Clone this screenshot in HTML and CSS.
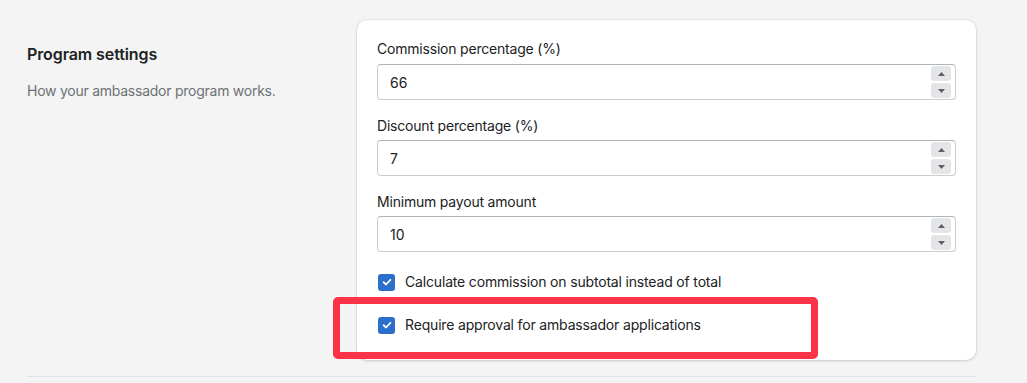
FILE: index.html
```html
<!DOCTYPE html>
<html>
<head>
<meta charset="utf-8">
<link rel="stylesheet" href="styles.css">
</head>
<body>
<div class="page">
  <section class="section">
    <div class="aside">
      <h2 class="title">Program settings</h2>
      <p class="desc">How your ambassador program works.</p>
    </div>
    <div class="card">
      <div class="field">
        <label class="label">Commission percentage (%)</label>
        <div class="input">
          <span class="value">66</span>
          <div class="spinner">
            <span class="spin"><svg width="7" height="4" viewBox="0 0 7 4"><path d="M0 4 L3.5 0 L7 4 Z" fill="#5c5f62"/></svg></span>
            <span class="spin"><svg width="7" height="4" viewBox="0 0 7 4"><path d="M0 0 L3.5 4 L7 0 Z" fill="#5c5f62"/></svg></span>
          </div>
        </div>
      </div>
      <div class="field">
        <label class="label">Discount percentage (%)</label>
        <div class="input">
          <span class="value">7</span>
          <div class="spinner">
            <span class="spin"><svg width="7" height="4" viewBox="0 0 7 4"><path d="M0 4 L3.5 0 L7 4 Z" fill="#5c5f62"/></svg></span>
            <span class="spin"><svg width="7" height="4" viewBox="0 0 7 4"><path d="M0 0 L3.5 4 L7 0 Z" fill="#5c5f62"/></svg></span>
          </div>
        </div>
      </div>
      <div class="field">
        <label class="label">Minimum payout amount</label>
        <div class="input">
          <span class="value">10</span>
          <div class="spinner">
            <span class="spin"><svg width="7" height="4" viewBox="0 0 7 4"><path d="M0 4 L3.5 0 L7 4 Z" fill="#5c5f62"/></svg></span>
            <span class="spin"><svg width="7" height="4" viewBox="0 0 7 4"><path d="M0 0 L3.5 4 L7 0 Z" fill="#5c5f62"/></svg></span>
          </div>
        </div>
      </div>
      <div class="check first">
        <span class="box"><svg width="12" height="12" viewBox="0 0 12 12"><path d="M2.6 6.2 L5 8.5 L9.4 3.8" fill="none" stroke="#fff" stroke-width="1.8" stroke-linecap="round" stroke-linejoin="round"/></svg></span>
        <span class="check-text">Calculate commission on subtotal instead of total</span>
      </div>
      <div class="check second">
        <span class="box"><svg width="12" height="12" viewBox="0 0 12 12"><path d="M2.6 6.2 L5 8.5 L9.4 3.8" fill="none" stroke="#fff" stroke-width="1.8" stroke-linecap="round" stroke-linejoin="round"/></svg></span>
        <span class="check-text">Require approval for ambassador applications</span>
      </div>
    </div>
  </section>
  <div class="divider"></div>
  <div class="highlight"></div>
</div>
</body>
</html>
```
FILE: styles.css
```css
html, body {
  margin: 0;
  padding: 0;
  background: #f4f4f4;
  font-family: Inter, "Noto Sans", sans-serif;
  color: #202223;
}
.page {
  position: relative;
  width: 1027px;
  height: 383px;
  overflow: hidden;
  padding: 20px 0 0 27px;
  box-sizing: border-box;
}
.section {
  display: flex;
}
.aside {
  width: 330px;
  flex-shrink: 0;
  padding-top: 24px;
}
.title {
  margin: 0;
  font-size: 16px;
  line-height: 20px;
  font-weight: 600;
  letter-spacing: -0.1px;
  color: #202223;
}
.desc {
  margin: 17px 0 0;
  font-size: 14px;
  line-height: 20px;
  letter-spacing: -0.25px;
  color: #6d7175;
}
.card {
  width: 619px;
  box-sizing: border-box;
  background: #fff;
  border-radius: 10px;
  box-shadow: 0 0 0 1px rgba(63,63,68,0.05), 0 1px 3px rgba(63,63,68,0.18);
  padding: 19px 20px 25px;
}
.field {
  margin-bottom: 16px;
}
.field:nth-child(3) {
  margin-bottom: 20px;
}
.label {
  display: block;
  font-size: 14px;
  line-height: 20px;
  letter-spacing: -0.2px;
  margin-bottom: 4px;
  color: #202223;
}
.field:first-child .label {
  margin-bottom: 5px;
}
.input {
  display: flex;
  align-items: center;
  height: 36px;
  box-sizing: border-box;
  border: 1px solid #c9cccf;
  border-top-color: #aeb4b9;
  border-radius: 4px;
  padding: 0 4px 0 12px;
}
.value {
  flex: 1;
  font-size: 14px;
  color: #202223;
}
.spinner {
  display: flex;
  flex-direction: column;
  gap: 2px;
}
.spin {
  width: 20px;
  height: 15px;
  background: #e4e5e7;
  border-radius: 3px;
  display: flex;
  align-items: center;
  justify-content: center;
}
.check {
  display: flex;
  align-items: center;
  height: 20px;
}
.check.second {
  margin-top: 23px;
}
.box {
  width: 17px;
  height: 17px;
  border-radius: 3px;
  background: #2c6ecb;
  display: flex;
  align-items: center;
  justify-content: center;
  margin: 0 10px 0 1px;
}
.check-text {
  font-size: 14px;
  line-height: 20px;
  letter-spacing: -0.17px;
  color: #202223;
}
.divider {
  width: 949px;
  height: 1px;
  background: #e1e3e5;
  margin-top: 16px;
}
.highlight {
  position: absolute;
  left: 333px;
  top: 297px;
  width: 485px;
  height: 62px;
  box-sizing: border-box;
  border: 7px solid #fb3347;
  border-radius: 5px;
}
```
